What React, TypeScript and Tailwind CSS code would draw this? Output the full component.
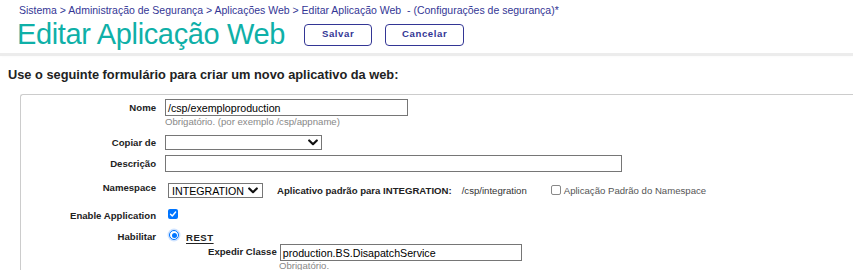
import React from "react";

const font = { fontFamily: '"Liberation Sans", Arial, sans-serif' };

function Chevron() {
  return (
    <svg width="10" height="7" viewBox="0 0 10 7" className="shrink-0">
      <polyline points="1.2,1.5 5,5.2 8.8,1.5" fill="none" stroke="#111" strokeWidth="2.2" strokeLinecap="round" strokeLinejoin="round" />
    </svg>
  );
}

function Label({ children, className = "" }: { children: React.ReactNode; className?: string }) {
  return (
    <div className={"w-[135px] shrink-0 text-right text-[9.6px] font-bold text-[#222] leading-[11px] " + className}>
      {children}
    </div>
  );
}

export default function App() {
  return (
    <div className="w-[853px] h-[270px] overflow-hidden bg-white relative" style={font}>
      {/* header */}
      <div className="border-b-[3px] border-[#ececec] shadow-[0_-1px_3px_rgba(0,0,0,0.08)]">
        <div className="pt-[4px] pl-[19px] text-[10.5px] leading-[12px] text-[#333695] whitespace-pre">
          Sistema &gt; Administração de Segurança &gt; Aplicações Web &gt; Editar Aplicação Web  - (Configurações de segurança)*
        </div>
        <div className="flex items-center mt-[4px] pl-[17px] h-[29px] mb-[4px]">
          <div className="text-[29px] leading-[29px] text-[#0fb0a8] tracking-[-0.35px] whitespace-nowrap">
            Editar Aplicação Web
          </div>
          <div className="flex gap-[13px] ml-[19px]">
            <div className="w-[68px] h-[22px] border border-[#333695] rounded-[4px] flex items-center justify-center text-[9.6px] font-bold tracking-[0.6px] text-[#333695]">
              Salvar
            </div>
            <div className="w-[79px] h-[22px] border border-[#333695] rounded-[4px] flex items-center justify-center text-[9.6px] font-bold tracking-[0.6px] text-[#333695]">
              Cancelar
            </div>
          </div>
        </div>
      </div>

      <div className="mt-[11px] pl-[8px] text-[12.8px] leading-[15px] font-bold text-[#222] whitespace-nowrap">
        Use o seguinte formulário para criar um novo aplicativo da web:
      </div>

      {/* form box */}
      <div className="mt-[12px] ml-[20px] border-l border-t border-[#cccccc] rounded-tl-[3px] h-[200px]">
        {/* Nome */}
        <div className="flex items-center mt-[4px] h-[17px]">
          <Label>Nome</Label>
          <div className="ml-[9px] w-[243px] h-[17px] border border-[#767676] pl-[2px] flex items-center text-[10.67px] text-black">
            /csp/exemploproduction
          </div>
        </div>
        <div className="ml-[144px] text-[9.6px] leading-[10px] mt-[1px] text-[#888]">
          Obrigatório. (por exemplo /csp/appname)
        </div>

        {/* Copiar de */}
        <div className="flex items-center mt-[8px] h-[15px]">
          <Label>Copiar de</Label>
          <div className="ml-[9px] w-[157px] h-[15px] border border-[#767676] flex items-center justify-end pr-[3px]">
            <Chevron />
          </div>
        </div>

        {/* Descrição */}
        <div className="flex items-center mt-[5px] h-[17px]">
          <Label>Descrição</Label>
          <div className="ml-[9px] w-[457px] h-[17px] border border-[#767676]"></div>
        </div>

        {/* Namespace */}
        <div className="flex items-start mt-[11px] h-[15px]">
          <Label className="mt-[-1px]">Namespace</Label>
          <div className="ml-[12px] w-[95px] h-[15px] border border-[#767676] flex items-center pl-[3px] gap-[4px] text-[10.67px] text-black">
            <span>INTEGRATION</span>
            <Chevron />
          </div>
          <div className="ml-[14px] mt-[2px] text-[9.6px] leading-[11px] font-bold text-[#222] whitespace-nowrap">
            Aplicativo padrão para INTEGRATION:
          </div>
          <div className="ml-[10px] mt-[2px] text-[9.6px] leading-[11px] text-[#333] whitespace-nowrap">
            /csp/integration
          </div>
          <div className="ml-[24px] mt-[2px] w-[10px] h-[10px] border border-[#888] rounded-[2px] bg-white"></div>
          <div className="ml-[3px] mt-[2px] text-[9.6px] leading-[11px] text-[#555] whitespace-nowrap">
            Aplicação Padrão do Namespace
          </div>
        </div>

        {/* Enable Application */}
        <div className="flex items-center mt-[11px] h-[12px]">
          <Label>Enable Application</Label>
          <div className="ml-[12px] mt-[-2px] w-[10px] h-[10px] rounded-[2px] bg-[#0075ff] flex items-center justify-center">
            <svg width="8" height="8" viewBox="0 0 8 8">
              <polyline points="1.5,4.2 3.3,6 6.6,2" fill="none" stroke="#fff" strokeWidth="1.4" strokeLinecap="round" strokeLinejoin="round" />
            </svg>
          </div>
        </div>

        {/* Habilitar */}
        <div className="flex items-start mt-[9px] h-[13px]">
          <Label className="mt-[1px]">Habilitar</Label>
          <div className="ml-[13px] w-[10px] h-[10px] rounded-full border-[1.5px] border-[#0075ff] bg-white flex items-center justify-center shadow-[0_0_0_1.5px_#cfe3ff]">
            <div className="w-[5px] h-[5px] rounded-full bg-[#0075ff]"></div>
          </div>
          <div className="ml-[7px] mt-[2px] text-[9.6px] leading-[11px] font-bold tracking-[0.5px] text-[#222] underline underline-offset-[1.5px]">
            REST
          </div>
        </div>

        {/* Expedir Classe */}
        <div className="flex items-center mt-[1px] h-[17px] ml-[187px]">
          <div className="text-[9.6px] font-bold text-[#222] whitespace-nowrap">Expedir Classe</div>
          <div className="ml-[3px] w-[242px] h-[17px] border border-[#767676] pl-[2px] flex items-center text-[10.67px] text-black">
            production.BS.DisapatchService
          </div>
        </div>
        <div className="ml-[258px] text-[9.6px] leading-[10px] mt-[0px] text-[#888]">Obrigatório.</div>
      </div>
    </div>
  );
}
